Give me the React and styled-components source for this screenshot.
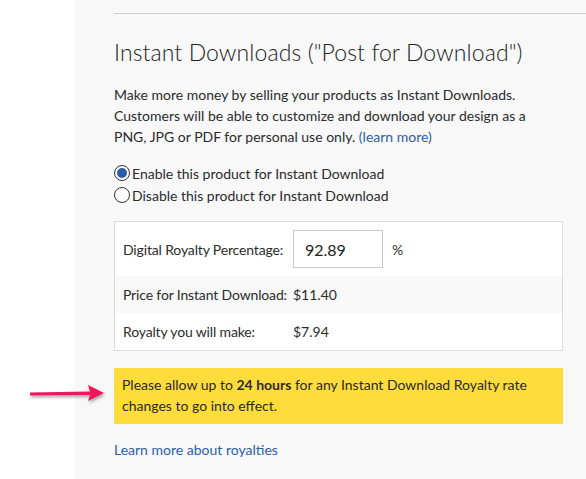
import styled, { createGlobalStyle } from 'styled-components';

const GlobalStyle = createGlobalStyle`
  html, body {
    margin: 0;
    padding: 0;
    background: #fff;
  }
  body {
    font-family: Lato, "Open Sans", Arial, sans-serif;
    color: #2b2b2b;
  }
`;

const Page = styled.div`
  display: flex;
  height: 479px;
  overflow: hidden;
  position: relative;
`;

const Gutter = styled.div`
  width: 74px;
  flex-shrink: 0;
  background: #fff;
`;

const Panel = styled.div`
  flex: 1;
  background: #f8f8f8;
  padding: 13px 0 0 40px;
`;

const Divider = styled.hr`
  margin: 0;
  border: 0;
  border-top: 1px solid #cfcfcf;
`;

const Title = styled.h2`
  margin: 24px 0 0;
  font-size: 23px;
  font-weight: 300;
  line-height: 28px;
  color: #222;
  letter-spacing: 0.1px;
`;

const Intro = styled.p`
  margin: 18px 0 0;
  width: 440px;
  font-size: 14px;
  line-height: 21px;
`;

const Link = styled.a`
  color: #2d5ea6;
  text-decoration: none;
  cursor: pointer;
`;

const Options = styled.div`
  margin-top: 15px;
  display: flex;
  flex-direction: column;
`;

const Option = styled.label`
  display: flex;
  align-items: center;
  height: 22px;
  font-size: 14px;
  gap: 2px;
`;

const Radio = styled.span`
  width: 16px;
  height: 16px;
  box-sizing: border-box;
  border-radius: 50%;
  border: 1px solid #333;
  background: #fff;
  display: flex;
  align-items: center;
  justify-content: center;
  &::after {
    content: '';
    width: 10px;
    height: 10px;
    border-radius: 50%;
    background: ${({ checked }) => (checked ? '#2b5ca6' : 'transparent')};
  }
`;

const Table = styled.div`
  margin-top: 15px;
  width: 449px;
  border: 1px solid #dcdcdc;
  box-sizing: border-box;
`;

const Row = styled.div`
  display: flex;
  align-items: center;
  height: ${({ tall }) => (tall ? '54px' : '37px')};
  padding-left: 8px;
  background: ${({ shaded }) => (shaded ? '#f8f8f8' : '#fff')};
  font-size: 14px;
`;

const Label = styled.span`
  width: 170px;
  flex-shrink: 0;
  letter-spacing: -0.15px;
`;

const Amount = styled.input`
  width: 90px;
  height: 38px;
  box-sizing: border-box;
  border: 1px solid #c9c9c9;
  padding: 0 0 0 11px;
  font-family: inherit;
  font-size: 16px;
  color: #222;
  background: #fff;
  outline: none;
`;

const Unit = styled.span`
  margin-left: 9px;
`;

const Notice = styled.div`
  margin-top: 17px;
  width: 449px;
  box-sizing: border-box;
  background: #fddc3b;
  padding: 6px 8px 8px;
  font-size: 14px;
  line-height: 21px;
  strong {
    font-weight: 700;
  }
`;

const FooterLink = styled(Link)`
  display: inline-block;
  margin-top: 17px;
  font-size: 14px;
`;

const Pointer = styled.svg`
  position: absolute;
  left: 28px;
  top: 382px;
  overflow: visible;
`;

const App = () => (
  <>
    <GlobalStyle />
    <Page>
      <Gutter />
      <Panel>
        <Divider />
        <Title>Instant Downloads ("Post for Download")</Title>
        <Intro>
          Make more money by selling your products as Instant Downloads.
          Customers will be able to customize and download your design as a
          PNG, JPG or PDF for personal use only. <Link>(learn more)</Link>
        </Intro>
        <Options>
          <Option>
            <Radio checked />
            Enable this product for Instant Download
          </Option>
          <Option>
            <Radio />
            Disable this product for Instant Download
          </Option>
        </Options>
        <Table>
          <Row tall>
            <Label>Digital Royalty Percentage:</Label>
            <Amount defaultValue="92.89" />
            <Unit>%</Unit>
          </Row>
          <Row shaded>
            <Label>Price for Instant Download:</Label>
            $11.40
          </Row>
          <Row>
            <Label>Royalty you will make:</Label>
            $7.94
          </Row>
        </Table>
        <Notice>
          Please allow up to <strong>24 hours</strong> for any Instant Download
          Royalty rate changes to go into effect.
        </Notice>
        <FooterLink>Learn more about royalties</FooterLink>
      </Panel>
      <Pointer width="80" height="24" viewBox="0 0 80 24">
        <defs>
          <filter id="arrowShadow" x="-20%" y="-50%" width="140%" height="200%">
            <feDropShadow dx="1" dy="2" stdDeviation="1.5" floodColor="#000" floodOpacity="0.35" />
          </filter>
        </defs>
        <path
          d="M2 10.5 L62 9.5 L60 3 L76 11 L60 19 L62 13 L2 13.5 Z"
          fill="#f0185c"
          filter="url(#arrowShadow)"
        />
      </Pointer>
    </Page>
  </>
);

export default App;
